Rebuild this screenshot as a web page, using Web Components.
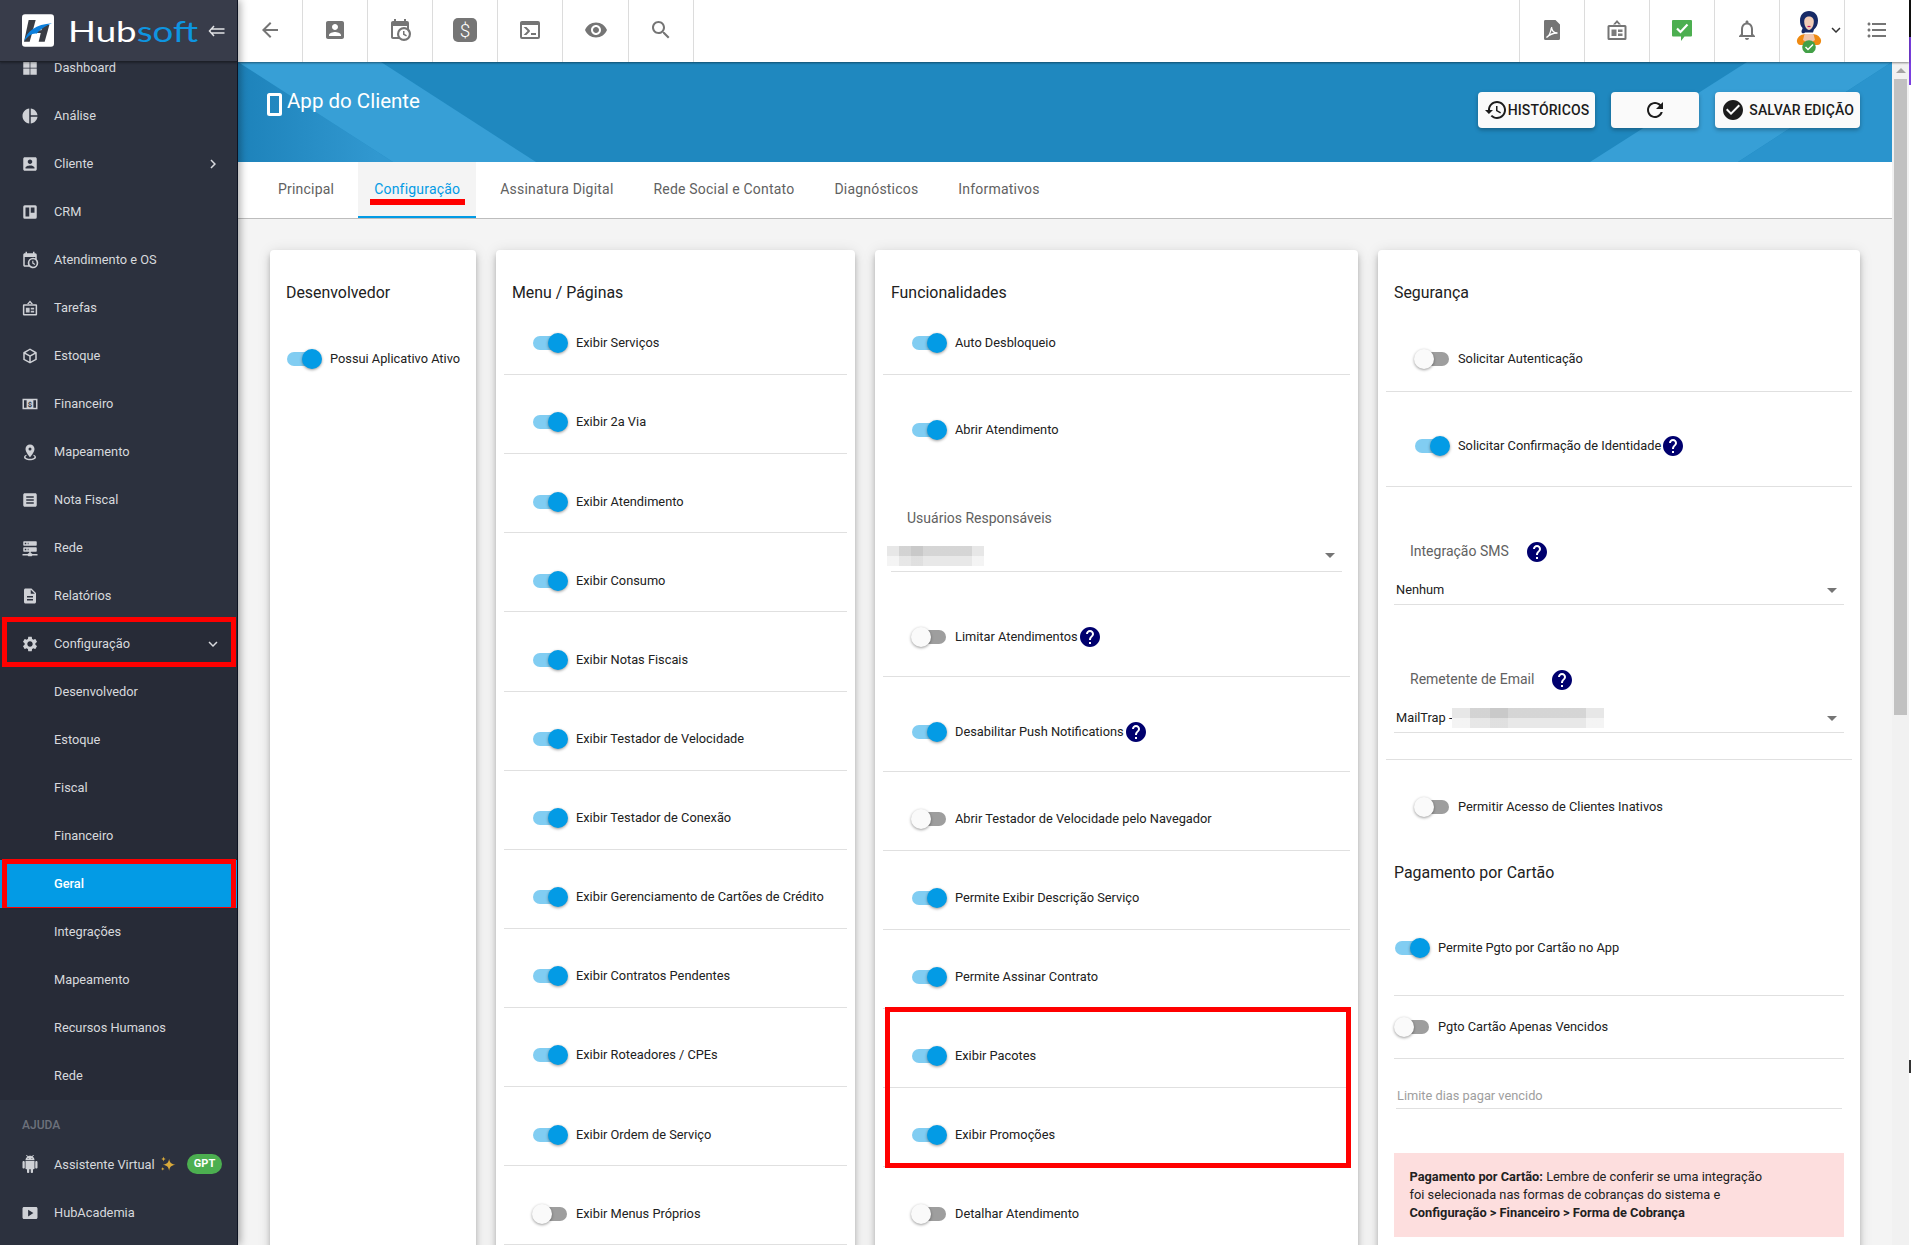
<!DOCTYPE html>
<html lang="pt-BR">
<head>
<meta charset="utf-8">
<title>Hubsoft - App do Cliente</title>
<style>
html,body{margin:0;height:100%;overflow:hidden;background:#f4f4f4;font-family:Roboto,"Liberation Sans",sans-serif;}
</style>
</head>
<body>
<hs-app>
  <hs-sidebar slot="side">
    <hs-nav-item icon="dashboard">Dashboard</hs-nav-item>
    <hs-nav-item icon="pie">Análise</hs-nav-item>
    <hs-nav-item icon="contact" chevron="chevron">Cliente</hs-nav-item>
    <hs-nav-item icon="trello">CRM</hs-nav-item>
    <hs-nav-item icon="calclock">Atendimento e OS</hs-nav-item>
    <hs-nav-item icon="board">Tarefas</hs-nav-item>
    <hs-nav-item icon="cube">Estoque</hs-nav-item>
    <hs-nav-item icon="cash">Financeiro</hs-nav-item>
    <hs-nav-item icon="marker">Mapeamento</hs-nav-item>
    <hs-nav-item icon="article">Nota Fiscal</hs-nav-item>
    <hs-nav-item icon="server">Rede</hs-nav-item>
    <hs-nav-item icon="report">Relatórios</hs-nav-item>
    <hs-nav-item icon="gear" chevron="expand" sub mark="cfg">Configuração</hs-nav-item>
    <hs-nav-item sub blank>Desenvolvedor</hs-nav-item>
    <hs-nav-item sub blank>Estoque</hs-nav-item>
    <hs-nav-item sub blank>Fiscal</hs-nav-item>
    <hs-nav-item sub blank>Financeiro</hs-nav-item>
    <hs-nav-item sub blank active mark="geral">Geral</hs-nav-item>
    <hs-nav-item sub blank>Integrações</hs-nav-item>
    <hs-nav-item sub blank>Mapeamento</hs-nav-item>
    <hs-nav-item sub blank>Recursos Humanos</hs-nav-item>
    <hs-nav-item sub blank>Rede</hs-nav-item>
    <hs-nav-heading>AJUDA</hs-nav-heading>
    <hs-nav-item icon="android" badge="GPT">Assistente Virtual <hs-icon name="sparkle" size="18" style="color:#d9a93a;margin-left:1px;vertical-align:-4px"></hs-icon></hs-nav-item>
    <hs-nav-item icon="play" style="margin-top:.6px">HubAcademia</hs-nav-item>
  </hs-sidebar>

  <hs-toolbar slot="top">
    <hs-tool icon="back"></hs-tool>
    <hs-tool icon="contact"></hs-tool>
    <hs-tool icon="calclock"></hs-tool>
    <hs-tool icon="dollar"></hs-tool>
    <hs-tool icon="console"></hs-tool>
    <hs-tool icon="eye"></hs-tool>
    <hs-tool icon="search"></hs-tool>
    <hs-tool slot="right" icon="pdf"></hs-tool>
    <hs-tool slot="right" icon="board"></hs-tool>
    <hs-tool slot="right" icon="chatcheck" tone="#4caf50"></hs-tool>
    <hs-tool slot="right" icon="bell"></hs-tool>
    <hs-tool slot="right"><hs-avatar></hs-avatar></hs-tool>
    <hs-tool slot="right" icon="list"></hs-tool>
  </hs-toolbar>

  <hs-banner slot="body" heading="App do Cliente">
    <hs-button icon="history">HISTÓRICOS</hs-button>
    <hs-button icon="refresh" wide></hs-button>
    <hs-button icon="checkcircle" spaced>SALVAR EDIÇÃO</hs-button>
  </hs-banner>

  <hs-tabs slot="body">
    <hs-tab>Principal</hs-tab>
    <hs-tab active>Configuração</hs-tab>
    <hs-tab>Assinatura Digital</hs-tab>
    <hs-tab>Rede Social e Contato</hs-tab>
    <hs-tab>Diagnósticos</hs-tab>
    <hs-tab>Informativos</hs-tab>
  </hs-tabs>

  <hs-grid slot="body">
    <hs-card heading="Desenvolvedor">
      <hs-row on h="112" c="56" pad="9" nodiv>Possui Aplicativo Ativo</hs-row>
    </hs-card>

    <hs-card heading="Menu / Páginas">
      <hs-row on h="72.1" c="40">Exibir Serviços</hs-row>
      <hs-row on>Exibir 2a Via</hs-row>
      <hs-row on>Exibir Atendimento</hs-row>
      <hs-row on>Exibir Consumo</hs-row>
      <hs-row on>Exibir Notas Fiscais</hs-row>
      <hs-row on>Exibir Testador de Velocidade</hs-row>
      <hs-row on>Exibir Testador de Conexão</hs-row>
      <hs-row on>Exibir Gerenciamento de Cartões de Crédito</hs-row>
      <hs-row on>Exibir Contratos Pendentes</hs-row>
      <hs-row on>Exibir Roteadores / CPEs</hs-row>
      <hs-row on>Exibir Ordem de Serviço</hs-row>
      <hs-row>Exibir Menus Próprios</hs-row>
    </hs-card>

    <hs-card heading="Funcionalidades">
      <hs-row on h="72.1" c="40">Auto Desbloqueio</hs-row>
      <hs-row on h="109.4" c="55" nodiv>Abrir Atendimento</hs-row>
      <hs-select label="Usuários Responsáveis" pt="23.2" gap="18.3" pb="5" lx="16" mx="8" mr="8" blur="97"></hs-select>
      <hs-row h="104.8" c="64.7" help>Limitar Atendimentos</hs-row>
      <hs-row on h="95" c="55" help>Desabilitar Push Notifications</hs-row>
      <hs-row h="79" c="47">Abrir Testador de Velocidade pelo Navegador</hs-row>
      <hs-row on>Permite Exibir Descrição Serviço</hs-row>
      <hs-row on>Permite Assinar Contrato</hs-row>
      <hs-mark>
        <hs-row on>Exibir Pacotes</hs-row>
        <hs-row on>Exibir Promoções</hs-row>
      </hs-mark>
      <hs-row c="46.8">Detalhar Atendimento</hs-row>
    </hs-card>

    <hs-card heading="Segurança">
      <hs-row h="88.5" c="55.5" pad="29">Solicitar Autenticação</hs-row>
      <hs-row on h="95" c="54.5" pad="29" help>Solicitar Confirmação de Identidade</hs-row>
      <hs-select label="Integração SMS" help value="Nenhum" pt="54.5" gap="19" pb="4" lx="16"></hs-select>
      <hs-select label="Remetente de Email" help value="MailTrap - " blur="152" pt="64" gap="19" pb="4" lx="16"></hs-select>
      <hs-spacer></hs-spacer>
      <hs-row h="101.5" c="46.5" pad="29" nodiv>Permitir Acesso de Clientes Inativos</hs-row>
      <hs-card-title>Pagamento por Cartão</hs-card-title>
      <hs-row on h="113.5" c="65.5" pad="1" mx="8">Permite Pgto por Cartão no App</hs-row>
      <hs-row h="62.5" c="30.7" pad="1" mx="8">Pgto Cartão Apenas Vencidos</hs-row>
      <hs-field>Limite dias pagar vencido</hs-field>
      <hs-alert><b>Pagamento por Cartão:</b> Lembre de conferir se uma integração<br>foi selecionada nas formas de cobranças do sistema e<br><b>Configuração &gt; Financeiro &gt; Forma de Cobrança</b></hs-alert>
    </hs-card>
  </hs-grid>
</hs-app>

<script>
const P = {
  back:'<path d="M20 11H7.83l5.59-5.59L12 4l-8 8 8 8 1.41-1.41L7.83 13H20v-2z"/>',
  contact:'<path d="M3 5v14c0 1.1.89 2 2 2h14c1.1 0 2-.9 2-2V5c0-1.1-.9-2-2-2H5c-1.11 0-2 .9-2 2zm12 4c0 1.66-1.34 3-3 3s-3-1.34-3-3 1.34-3 3-3 3 1.34 3 3zm-9 8c0-2 4-3.1 6-3.1s6 1.1 6 3.1v1H6v-1z"/>',
  calclock:'<path d="M15,13H16.5V15.82L18.94,17.23L18.19,18.53L15,16.69V13M19,8H5V19H9.67C9.24,18.09 9,17.07 9,16A7,7 0 0,1 16,9C17.07,9 18.09,9.24 19,9.67V8M5,21C3.89,21 3,20.1 3,19V5C3,3.89 3.89,3 5,3H6V1H8V3H16V1H18V3H19A2,2 0 0,1 21,5V11.1C22.24,12.36 23,14.09 23,16A7,7 0 0,1 16,23C14.09,23 12.36,22.24 11.1,21H5M16,11.15A4.85,4.85 0 0,0 11.15,16C11.15,18.68 13.32,20.85 16,20.85A4.85,4.85 0 0,0 20.85,16C20.85,13.32 18.68,11.15 16,11.15Z"/>',
  dollar:'<rect x="0" y="0" width="24" height="24" rx="5"/><text x="12" y="19" text-anchor="middle" font-family="Roboto,sans-serif" font-weight="300" font-size="19" fill="#fff">$</text>',
  console:'<path d="M20,19V7H4V19H20M20,3A2,2 0 0,1 22,5V19A2,2 0 0,1 20,21H4A2,2 0 0,1 2,19V5C2,3.89 2.9,3 4,3H20M13,17V15H18V17H13M9.58,13L5.57,9H8.4L11.7,12.3C12.09,12.69 12.09,13.33 11.7,13.72L8.42,17H5.59L9.58,13Z"/>',
  eye:'<path d="M12 4.5C7 4.5 2.73 7.61 1 12c1.73 4.39 6 7.5 11 7.5s9.27-3.11 11-7.5c-1.73-4.39-6-7.5-11-7.5zM12 17c-2.76 0-5-2.24-5-5s2.24-5 5-5 5 2.24 5 5-2.24 5-5 5zm0-8c-1.66 0-3 1.34-3 3s1.34 3 3 3 3-1.34 3-3-1.34-3-3-3z"/>',
  search:'<path d="M15.5 14h-.79l-.28-.27C15.41 12.59 16 11.11 16 9.5 16 5.91 13.09 3 9.5 3S3 5.91 3 9.5 5.91 16 9.5 16c1.61 0 3.09-.59 4.23-1.57l.27.28v.79l5 4.99L20.49 19l-4.99-5zm-6 0C7.01 14 5 11.99 5 9.5S7.01 5 9.5 5 14 7.01 14 9.5 11.99 14 9.5 14z"/>',
  pdf:'<path d="M5 2h10.5L20 6.5V20.5a1.5 1.5 0 0 1-1.5 1.5h-13A1.5 1.5 0 0 1 4 20.5v-17A1.5 1.5 0 0 1 5 2z"/><path d="M6.5 19.5c2.5-1.2 4.2-5 5-10.5.2 3.6 2 5.8 6 6-4.4.1-8.2 1.5-11 4.5z" fill="none" stroke="#fff" stroke-width="1.3"/>',
  board:'<path d="M4 7h16a1.5 1.5 0 0 1 1.5 1.5v12A1.5 1.5 0 0 1 20 22H4a1.5 1.5 0 0 1-1.5-1.5v-12A1.5 1.5 0 0 1 4 7zm.5 2v11h15V9zM8 6.5 12 2l4 4.5h-2.4L12 4.8 10.4 6.5z" fill-rule="evenodd"/><path d="M6.5 11.5h5v6.500h-5zM13 11.500h4.500V14H13zM13 15.500h4.500V18H13z" opacity=".95"/>',
  chatcheck:'<path d="M3 2h18a1 1 0 0 1 1 1v14.5a1 1 0 0 1-1 1h-6.5L11 23v-4.5H3a1 1 0 0 1-1-1V3a1 1 0 0 1 1-1z"/><path d="M7 10.500l3.500 3.500L17.500 6.500" fill="none" stroke="#fff" stroke-width="2.2"/>',
  bell:'<path d="M12 22c1.100 0 2-.9 2-2h-4c0 1.100.9 2 2 2zm6-6v-5c0-3.070-1.630-5.640-4.500-6.320V4c0-.83-.67-1.500-1.500-1.500s-1.500.67-1.500 1.500v.68C7.640 5.360 6 7.920 6 11v5l-2 2v1h16v-1l-2-2zm-2 1H8v-6c0-2.480 1.510-4.500 4-4.500s4 2.020 4 4.500v6z"/>',
  list:'<path d="M4 10.500c-.83 0-1.500.67-1.500 1.500s.67 1.500 1.500 1.500 1.500-.67 1.500-1.500-.67-1.500-1.500-1.500zm0-6c-.83 0-1.500.67-1.500 1.500S3.170 7.500 4 7.500 5.500 6.830 5.500 6 4.830 4.500 4 4.500zm0 12c-.83 0-1.500.68-1.500 1.500s.68 1.500 1.500 1.500 1.500-.68 1.500-1.500-.67-1.500-1.500-1.500zM7 19h14v-2H7v2zm0-6h14v-2H7v2zm0-8v2h14V5H7z"/>',
  expand:'<path d="M16.590 8.590L12 13.170 7.410 8.590 6 10l6 6 6-6z"/>',
  chevron:'<path d="M10 6L8.590 7.410 13.170 12l-4.580 4.590L10 18l6-6z"/>',
  history:'<path d="M13 3c-4.970 0-9 4.030-9 9H1l3.890 3.890.07.14L9 12H6c0-3.870 3.130-7 7-7s7 3.130 7 7-3.130 7-7 7c-1.930 0-3.680-.79-4.940-2.060l-1.420 1.420C8.270 19.990 10.510 21 13 21c4.970 0 9-4.030 9-9s-4.030-9-9-9zm-1 5v5l4.280 2.540.72-1.210-3.500-2.080V8H12z"/>',
  refresh:'<path d="M17.650 6.350C16.200 4.900 14.210 4 12 4c-4.420 0-7.990 3.580-7.990 8s3.570 8 7.990 8c3.730 0 6.840-2.550 7.730-6h-2.080c-.82 2.330-3.040 4-5.650 4-3.310 0-6-2.690-6-6s2.690-6 6-6c1.660 0 3.140.69 4.220 1.780L13 11h7V4l-2.350 2.350z"/>',
  checkcircle:'<path d="M12 2C6.480 2 2 6.480 2 12s4.480 10 10 10 10-4.480 10-10S17.520 2 12 2zm-2 15l-5-5 1.410-1.410L10 14.170l7.590-7.590L19 8l-9 9z"/>',
  help:'<path d="M12 2C6.480 2 2 6.480 2 12s4.480 10 10 10 10-4.480 10-10S17.520 2 12 2zm1 17h-2v-2h2v2zm2.070-7.750l-.9.92C13.450 12.900 13 13.500 13 15h-2v-.5c0-1.100.45-2.100 1.170-2.830l1.240-1.260c.37-.36.59-.86.59-1.410 0-1.100-.9-2-2-2s-2 .9-2 2H8c0-2.210 1.790-4 4-4s4 1.790 4 4c0 .88-.36 1.680-.93 2.250z"/>',
  dashboard:'<path d="M3 3h8.500v8.500H3zM12.500 3H21v8.500h-8.500zM3 12.500h8.500V21H3zM12.500 12.500H21V21h-8.500z"/>',
  pie:'<path d="M11,2V22C5.900,21.500 2,17.200 2,12C2,6.800 5.900,2.500 11,2M13,2V11H22C21.500,6.200 17.800,2.500 13,2M13,13V22C17.700,21.500 21.500,17.800 22,13H13Z"/>',
  trello:'<path fill-rule="evenodd" d="M5 3h14a2 2 0 0 1 2 2v14a2 2 0 0 1-2 2H5a2 2 0 0 1-2-2V5a2 2 0 0 1 2-2zm1 3v12h5V6zm7 0v7h5V6z"/>',
  cube:'<path d="M21,16.500C21,16.880 20.790,17.210 20.470,17.380L12.570,21.820C12.410,21.940 12.210,22 12,22C11.790,22 11.590,21.940 11.430,21.820L3.530,17.380C3.210,17.210 3,16.880 3,16.500V7.500C3,7.120 3.210,6.790 3.530,6.620L11.430,2.180C11.590,2.060 11.790,2 12,2C12.210,2 12.410,2.060 12.570,2.180L20.470,6.620C20.790,6.790 21,7.120 21,7.500V16.500M12,4.150L6.040,7.500L12,10.850L17.960,7.500L12,4.150M5,15.910L11,19.290V12.580L5,9.210V15.910M19,15.910V9.210L13,12.580V19.290L19,15.910Z"/>',
  cash:'<path fill-rule="evenodd" d="M2 5h20v14H2zm2 2v10h3.500V7zm12.500 0v10H20V7z"/><rect x="8" y="7" width="8" height="10"/><text x="12" y="15.500" text-anchor="middle" font-family="Roboto,sans-serif" font-weight="700" font-size="10" fill="#2c313e">$</text>',
  marker:'<path d="M12,2C15.310,2 18,4.660 18,7.950C18,12.410 12,19 12,19C12,19 6,12.410 6,7.950C6,4.660 8.690,2 12,2M12,6A2,2 0 0,0 10,8A2,2 0 0,0 12,10A2,2 0 0,0 14,8A2,2 0 0,0 12,6M20,19C20,21.210 16.420,23 12,23C7.580,23 4,21.210 4,19C4,17.710 5.220,16.560 7.110,15.830L7.750,16.740C6.670,17.190 6,17.810 6,18.500C6,19.880 8.690,21 12,21C15.310,21 18,19.880 18,18.500C18,17.810 17.330,17.190 16.250,16.740L16.890,15.830C18.780,16.560 20,17.710 20,19Z"/>',
  article:'<path d="M19 3H5c-1.100 0-2 .9-2 2v14c0 1.100.9 2 2 2h14c1.100 0 2-.9 2-2V5c0-1.100-.9-2-2-2zm-2 14H7v-2h10v2zm0-4H7v-2h10v2zm0-4H7V7h10v2z"/>',
  server:'<path d="M13,19H14A1,1 0 0,1 15,20H22V22H15A1,1 0 0,1 14,23H10A1,1 0 0,1 9,22H2V20H9A1,1 0 0,1 10,19H11V17H4A1,1 0 0,1 3,16V12A1,1 0 0,1 4,11H20A1,1 0 0,1 21,12V16A1,1 0 0,1 20,17H13V19M4,3H20A1,1 0 0,1 21,4V8A1,1 0 0,1 20,9H4A1,1 0 0,1 3,8V4A1,1 0 0,1 4,3M9,7H10V5H9V7M9,15H10V13H9V15M5,5V7H7V5H5M5,13V15H7V13H5Z"/>',
  report:'<path d="M14 2H6c-1.100 0-1.990.9-1.990 2L4 20c0 1.100.89 2 1.990 2H18c1.100 0 2-.9 2-2V8l-6-6zm2 16H8v-2h8v2zm0-4H8v-2h8v2zm-3-5V3.500L18.500 9H13z"/>',
  gear:'<path d="M19.140,12.940c0.040-0.300,0.060-0.610,0.060-0.940c0-0.320-0.020-0.640-0.070-0.940l2.030-1.580c0.180-0.140,0.230-0.410,0.120-0.610l-1.920-3.320c-0.120-0.220-0.370-0.290-0.590-0.220l-2.390,0.960c-0.500-0.380-1.030-0.700-1.620-0.940L14.400,2.810c-0.040-0.240-0.240-0.410-0.480-0.410h-3.840c-0.240,0-0.430,0.170-0.470,0.410L9.250,5.350C8.660,5.590,8.120,5.920,7.630,6.290L5.240,5.330c-0.220-0.080-0.470,0-0.590,0.220L2.740,8.870C2.620,9.080,2.660,9.340,2.860,9.480l2.030,1.580C4.840,11.360,4.800,11.690,4.800,12s0.020,0.640,0.070,0.940l-2.030,1.580c-0.180,0.140-0.230,0.410-0.120,0.610l1.920,3.320c0.120,0.220,0.370,0.290,0.590,0.220l2.390-0.960c0.500,0.380,1.030,0.700,1.620,0.940l0.360,2.540c0.050,0.240,0.240,0.410,0.480,0.410h3.840c0.240,0,0.440-0.170,0.470-0.410l0.360-2.540c0.590-0.240,1.130-0.560,1.620-0.940l2.390,0.960c0.220,0.080,0.470,0,0.590-0.220l1.920-3.320c0.120-0.220,0.070-0.470-0.120-0.610L19.140,12.940z M12,15.600c-1.980,0-3.600-1.620-3.600-3.600s1.620-3.600,3.600-3.600s3.600,1.620,3.600,3.600S13.980,15.600,12,15.600z"/>',
  android:'<path d="M6 18c0 .55.45 1 1 1h1v3.500c0 .83.67 1.500 1.500 1.500s1.500-.67 1.500-1.500V19h2v3.500c0 .83.67 1.500 1.500 1.500s1.500-.67 1.500-1.500V19h1c.55 0 1-.45 1-1V8H6v10zM3.500 8C2.670 8 2 8.670 2 9.500v7c0 .83.67 1.500 1.500 1.500S5 17.330 5 16.500v-7C5 8.670 4.330 8 3.500 8zm17 0c-.83 0-1.500.67-1.500 1.500v7c0 .83.67 1.500 1.500 1.500s1.500-.67 1.500-1.500v-7c0-.83-.67-1.500-1.500-1.500zm-4.970-5.840l1.300-1.300c.2-.2.2-.51 0-.71-.2-.2-.51-.2-.71 0l-1.480 1.480C13.850 1.230 12.950 1 12 1c-.96 0-1.860.23-2.660.63L7.850.15c-.2-.2-.51-.2-.71 0-.2.2-.2.51 0 .71l1.310 1.310C6.970 3.260 6 5.010 6 7h12c0-1.990-.97-3.750-2.470-4.840zM10 5H9V4h1v1zm5 0h-1V4h1v1z"/>',
  play:'<path d="M20 4H4c-1.100 0-2 .9-2 2v12c0 1.100.9 2 2 2h16c1.100 0 2-.9 2-2V6c0-1.100-.9-2-2-2zM9.500 16.500v-9l7 4.500-7 4.500z"/>',
  sparkle:'<path d="M13.500 5c1 5.500 2.500 7 8.500 8-6 1-7.500 2.500-8.500 8-1-5.500-2.500-7-8.500-8 6-1 7.500-2.500 8.500-8zM6 2c.4 2.200 1.100 2.900 3.300 3.300C7.100 5.700 6.400 6.400 6 8.600c-.4-2.200-1.100-2.900-3.300-3.300C4.900 4.900 5.600 4.200 6 2zM5 16c.3 1.700.8 2.200 2.500 2.500C5.800 18.800 5.300 19.300 5 21c-.3-1.700-.8-2.200-2.500-2.500C4.200 18.200 4.700 17.700 5 16z"/>'
};

function define(name, css, html, extra){
  customElements.define(name, class extends HTMLElement{
    constructor(){super();this.attachShadow({mode:'open'}).innerHTML='<style>'+css+'</style>'+html;}
    connectedCallback(){ if(extra) extra.call(this,this.shadowRoot); }
  });
}

define('hs-icon',':host{display:inline-block;line-height:0;color:inherit}svg{display:block;fill:currentColor}','<svg viewBox="0 0 24 24"></svg>',function(r){
  const s=this.getAttribute('size')||24,svg=r.querySelector('svg');
  svg.setAttribute('width',s);svg.setAttribute('height',s);
  svg.innerHTML=P[this.getAttribute('name')]||'';
});

define('hs-app',`
  :host{display:grid;grid-template-columns:238px minmax(0,1fr) 2px;height:1245px;overflow:hidden;background:#f4f4f4}
  .main{display:flex;flex-direction:column;min-width:0;height:1245px}
  .under{display:flex;flex:1;min-height:0}
  .body{flex:1;min-width:0;overflow:hidden;display:flex;flex-direction:column}
  .strip{background:#fff;display:flex;flex-direction:column}
  .strip i{display:block}
`,`
  <slot name="side"></slot>
  <div class="main">
    <slot name="top"></slot>
    <div class="under">
      <div class="body"><slot name="body"></slot></div>
      <hs-scrollbar></hs-scrollbar>
    </div>
  </div>
  <div class="strip">
    <i style="height:37px;background:#111"></i>
    <i style="height:48px;background:#7a3fe0"></i>
    <i style="height:975px"></i>
    <i style="height:13px;background:#333"></i>
  </div>
`);

define('hs-scrollbar',`
  :host{display:block;width:17px;background:#f1f1f1;flex:none}
  .arrow{height:17px;display:flex;align-items:center;justify-content:center}
  .arrow i{display:block;width:0;height:0;border:5px solid transparent;border-top:0;border-bottom:5px solid #a3a3a3}
  .thumb{height:636px;margin:0 2px 0 2px;background:#c1c1c1}
`,`<div class="arrow"><i></i></div><div class="thumb"></div>`);

define('hs-sidebar',`
  :host{display:flex;flex-direction:column;width:238px;height:1245px;background:#2c313e;border-right:1px solid #0d1322;box-sizing:border-box;position:relative;z-index:3;box-shadow:2px 0 8px rgba(0,0,0,.35);overflow:hidden}
  header{height:62px;flex:none;box-sizing:border-box;background:#383c4a;border-bottom:1px solid #1d2028;display:flex;align-items:center;padding-left:22px;position:relative;z-index:1;box-shadow:0 1px 2px rgba(0,0,0,.35)}
  .mark{width:32px;height:33px;flex:none}
  .word{margin-left:14px;font:400 28px/1 "Lato",Roboto,sans-serif;color:#fff;display:inline-block;width:105px;transform:scaleX(1.31);transform-origin:left center;white-space:nowrap}
  .word b{font-weight:400;color:#0e95e0}
  .coll{margin-left:auto;margin-right:12px;flex:none}
  nav{flex:1;min-height:0;overflow:hidden}
  .inner{margin-top:-17.800px}
`,`
  <header>
    <svg class="mark" viewBox="0 0 96 97"><rect width="96" height="97" rx="9" fill="#fff"/>
      <path d="M20 17h21L23 82H6z" fill="#3a3d44"/><path d="M62 32h20L68 82H50z" fill="#3a3d44"/><path d="M32 48h40l-3 8H30z" fill="#3a3d44"/>
      <path d="M7 80C13 52 42 30 90 27 72 34 54 46 44 58 30 56 18 66 7 80z" fill="#0b7fdc"/></svg>
    <span class="word">Hub<b>soft</b></span>
    <svg class="coll" width="17" height="12" viewBox="0 0 17 12" fill="none" stroke="#e2e3e6" stroke-width="1.5"><path d="M6 1 1.500 6 6 11M3.500 4H16.500M3.500 8H16.500"/></svg>
  </header>
  <nav><div class="inner"><slot></slot></div></nav>
`);

define('hs-nav-heading',`:host{display:block;height:40.100px;box-sizing:border-box;padding:17.600px 0 0 22px;font:500 12px/14px Roboto,sans-serif;color:#6d717c}`,`<slot></slot>`);

define('hs-nav-item',`
  :host{display:flex;align-items:center;height:48px;color:#d7d9dd;font:400 12.800px/16px Roboto,"Liberation Sans",sans-serif;position:relative;padding-right:15px;box-sizing:border-box}
  :host([sub]){background:#272b37}
  :host([active]){background:#039be5;color:#fff;font-weight:500}
  .ic{width:18px;height:18px;margin:0 15px 0 21px;flex:none;color:#cfd1d6}
  .t{white-space:nowrap;flex:1}
  .badge{background:#4caf50;color:#fff;font:700 11px/20px Roboto,sans-serif;height:20px;width:35px;text-align:center;border-radius:10px;flex:none}
  :host([mark])::after{content:"";position:absolute;left:2px;right:1px;border:5px solid #f00;box-sizing:border-box;pointer-events:none}
  :host([mark="cfg"])::after{top:-3.200px;height:50px}
  :host([mark="geral"])::after{top:-1.200px;height:52.500px}
`,`<span class="ic"></span><span class="t"><slot></slot></span>`,function(r){
  const ic=r.querySelector('.ic'),n=this.getAttribute('icon');
  if(n) ic.innerHTML='<hs-icon name="'+n+'" size="18"></hs-icon>';
  const c=this.getAttribute('chevron');
  if(c){const e=document.createElement('hs-icon');e.setAttribute('name',c);e.setAttribute('size','18');e.style.flex='none';r.appendChild(e);}
  const b=this.getAttribute('badge');
  if(b){const e=document.createElement('span');e.className='badge';e.textContent=b;r.appendChild(e);}
});

define('hs-toolbar',`
  :host{display:flex;height:62px;flex:none;background:#fff;position:relative;z-index:2;box-shadow:0 1px 2px rgba(0,0,0,.45)}
  .l,.r{display:flex}
  .r{margin-left:auto}
`,`<div class="l"><slot></slot></div><div class="r"><slot name="right"></slot></div>`);

define('hs-tool',`
  :host{display:flex;align-items:center;justify-content:center;width:65.100px;height:62px;padding-bottom:2px;box-sizing:border-box;border-right:1px solid #dcdcdc;color:#757575;flex:none}
  :host([slot="right"]){width:65px;border-right:0;border-left:1px solid #dcdcdc}
`,`<slot></slot>`,function(r){
  const n=this.getAttribute('icon');
  if(n){const t=this.getAttribute('tone');
    const e=document.createElement('hs-icon');e.setAttribute('name',n);e.setAttribute('size','24');if(t)e.style.color=t;r.appendChild(e);}
});

define('hs-avatar',`
  :host{display:flex;align-items:center;width:56px;margin-left:10px;flex:none}
  svg.p{flex:none}
`,`
  <svg class="p" width="40" height="46" viewBox="0 0 40 46">
    <path d="M8 33c1-4 5-6 9-6h6c4 0 8 2 9 6 .5 2-1 5-3 5H11c-2 0-3.500-3-3-5z" fill="#ef8a12"/>
    <path d="M15.500 27h9l1.500 6-6 4-6-4z" fill="#f0c4ab"/>
    <path d="M20 4c5.500 0 9 4 9 9.500 0 4-1.500 7-4 9l-1 3h-8c-1.500 1.500-3.500 1-3.500-1 0-1.500 1-2 1-3.500-2-2-2.500-4.500-2.500-7.500C11 8 14.500 4 20 4z" fill="#172a66"/>
    <path d="M20 9.500c2.800 0 4.800 1.500 4.800 5 0 4.500-2.500 8.500-4.800 8.500s-4.800-4-4.800-8.500c0-3.500 2-5 4.800-5z" fill="#f2cdb6"/>
    <path d="M18.500 19.500h3" stroke="#c2185b" stroke-width="1.200"/>
    <circle cx="20" cy="40" r="6.800" fill="#43a047"/>
    <path d="M16.500 40l2.500 2.500 5-5" fill="none" stroke="#fff" stroke-width="1.500"/>
  </svg>
  <hs-icon name="expand" size="18" style="color:#333;margin-left:-2px"></hs-icon>
`);

define('hs-banner',`
  :host{display:flex;align-items:center;height:100px;flex:none;background:#1f88bf;position:relative;padding:0 32px 4px 29px;box-sizing:border-box;overflow:hidden}
  svg.bg{position:absolute;left:0;top:0;width:100%;height:100%}
  .title{position:relative;display:flex;align-items:flex-start;color:#fff;font:400 20.500px/24px Roboto,sans-serif;align-self:flex-start;margin-top:27px}
  .ph{width:15px;height:23px;margin:4px 5px 0 0;border:3px solid #fff;border-bottom-width:3.500px;border-radius:2.500px;box-sizing:border-box;flex:none}
  .acts{position:relative;margin-left:auto;display:flex;gap:16px}
`,`
  <svg class="bg" viewBox="0 0 1654 100" preserveAspectRatio="none">
    <defs>
      <linearGradient id="l" x1="0" x2="1" y1="0" y2="0"><stop offset="0" stop-color="#1d82ba"/><stop offset=".9" stop-color="#3198d0"/></linearGradient>
    </defs>
    <path d="M0 0 155 100H0z" fill="url(#l)"/>
    <path d="M0 0H143L298 100H155z" fill="#379fd6"/>
    <path d="M1509 0H1654L1500 100H1352z" fill="#379fd6"/>
    <path d="M1654 0V100H1500z" fill="#2a94cd"/>
  </svg>
  <div class="title"><span class="ph"></span><span class="h"></span></div>
  <div class="acts"><slot></slot></div>
`,function(r){r.querySelector('.h').textContent=this.getAttribute('heading');});

define('hs-button',`
  :host{display:flex;align-items:center;height:36px;box-sizing:border-box;padding:0 6px;background:#fafafa;color:#1c1c1c;border-radius:4px;font:500 14px/36px Roboto,sans-serif;letter-spacing:.12px;white-space:nowrap;box-shadow:0 2px 4px rgba(0,0,0,.3)}
  :host([wide]){width:88px;justify-content:center}
  :host([spaced]) .ic{margin-right:4px}
  .ic{width:24px;height:24px;flex:none}
`,`<span class="ic"></span><slot></slot>`,function(r){
  r.querySelector('.ic').innerHTML='<hs-icon name="'+this.getAttribute('icon')+'" size="24"></hs-icon>';
});

define('hs-tabs',`
  :host{display:flex;gap:8px;height:57px;flex:none;box-sizing:border-box;background:#fff;border-bottom:1px solid #bdbdbd;padding-left:24px}
`,`<slot></slot>`);

define('hs-tab',`
  :host{display:block;height:56px;box-sizing:border-box;padding:0 16px;font:400 14px/54px Roboto,sans-serif;color:#616161;letter-spacing:.2px;position:relative;white-space:nowrap}
  :host([active]){background:#f4f4f4;color:#039be5;border-bottom:2px solid #039be5}
  :host([active])::after{content:"";position:absolute;left:12px;right:11px;top:37px;height:6px;background:#f00}
`,`<slot></slot>`);

define('hs-grid',`
  :host{display:grid;grid-template-columns:206px 359px 483px minmax(0,1fr);gap:20px;padding:31px 32px 0;min-height:1100px;box-sizing:border-box;align-items:stretch}
`,`<slot></slot>`);

define('hs-card',`
  :host{display:block;background:#fff;border-radius:4px;box-shadow:0 3px 5px -1px rgba(0,0,0,.2),0 5px 8px 0 rgba(0,0,0,.12),0 1px 14px 0 rgba(0,0,0,.1);padding:0 8px;min-width:0;height:1100px;box-sizing:border-box}
  .ttl{font:400 15.900px/21px Roboto,sans-serif;color:#212121;padding:32px 0 0 8px}
`,`<div class="ttl"></div><slot></slot>`,function(r){
  r.querySelector('.ttl').textContent=this.getAttribute('heading');
});

define('hs-card-title',`:host{display:block;font:400 15.900px/21px Roboto,sans-serif;color:#212121;padding-left:8px}`,`<slot></slot>`);

define('hs-toggle',`
  :host{display:block;position:relative;width:34px;height:14px;border-radius:7px;background:#9e9e9e;flex:none}
  :host([on]){background:#81cdf2}
  i{position:absolute;top:-3px;left:-1px;width:20px;height:20px;border-radius:50%;background:#fafafa;box-shadow:0 1px 3px rgba(0,0,0,.4)}
  :host([on]) i{left:auto;right:-1px;background:#039be5}
`,`<i></i>`);

define('hs-help',`:host{display:block;width:24px;height:24px;flex:none;color:#00006e}`,`<hs-icon name="help" size="24"></hs-icon>`);

define('hs-row',`
  :host{display:block}
  .r{display:flex;align-items:center;box-sizing:border-box;font:400 12.800px/20px Roboto,sans-serif;color:#212121;white-space:nowrap;border-bottom:1px solid #e0e0e0}
  .r.nd{border-bottom:0}
  .lb{margin-left:9px}
`,`<div class="r"><hs-toggle></hs-toggle><span class="lb"><slot></slot></span></div>`,function(r){
  const a=(k,d)=>this.hasAttribute(k)?+this.getAttribute(k):d;
  const h=a('h',79.14),c=a('c',47.3),nd=this.hasAttribute('nodiv'),el=r.querySelector('.r');
  const p=2*c-h+(nd?0:1);
  el.style.height=h+'px';
  if(p>=0)el.style.paddingTop=p+'px';else el.style.paddingBottom=(-p)+'px';
  el.style.paddingLeft=a('pad',29)+'px';
  const mx=a('mx',0);if(mx){el.style.marginLeft=mx+'px';el.style.marginRight=mx+'px';}
  if(nd)el.classList.add('nd');
  if(this.hasAttribute('on'))r.querySelector('hs-toggle').setAttribute('on','');
  if(this.hasAttribute('help'))el.appendChild(document.createElement('hs-help'));
});

define('hs-mark',`
  :host{display:block;position:relative}
  :host::after{content:"";position:absolute;left:2.300px;right:-.7px;top:-2.200px;bottom:-1.100px;border:5px solid #f00;box-sizing:border-box;pointer-events:none}
`,`<slot></slot>`);

define('hs-select',`
  :host{display:block;font:400 12.800px/20px Roboto,sans-serif;color:#212121}
  .lab{display:flex;align-items:center;height:20px;color:#616161;font-size:14px;white-space:nowrap;overflow:visible}
  hs-help{margin:2px 0 0 16px}
  .val{display:flex;align-items:center;border-bottom:1px solid #e0e0e0;padding-left:2px;height:20px;box-sizing:content-box;position:relative}
  .bl{height:20px;background:linear-gradient(180deg,rgba(0,0,0,.03) 50%,rgba(255,255,255,.35) 50%),linear-gradient(90deg,#eee 0 12%,#dadada 12% 25%,#cfcfcf 25% 37%,#dcdcdc 37% 88%,#eee 88%)}
  .caret{margin-left:auto;margin-right:7px;width:0;height:0;border:5px solid transparent;border-bottom:0;border-top:5px solid #757575}
`,`<div class="lab"><span class="lt"></span></div><div class="val"><span class="v"></span><span class="bl"></span><i class="caret"></i></div>`,function(r){
  const g=(k,d)=>this.hasAttribute(k)?this.getAttribute(k):d;
  const mx=+g('mx',8),mr=+g('mr',mx),lx=+g('lx',16.5);
  this.style.paddingTop=g('pt',0)+'px';
  const lab=r.querySelector('.lab'),val=r.querySelector('.val');
  lab.style.marginLeft=(mx+lx)+'px';
  r.querySelector('.lt').textContent=g('label','');
  if(this.hasAttribute('help'))lab.appendChild(document.createElement('hs-help'));
  val.style.margin=g('gap',19)+'px '+mr+'px 0 '+mx+'px';
  val.style.paddingBottom=g('pb',4)+'px';
  r.querySelector('.v').textContent=g('value','');
  const bl=r.querySelector('.bl'),b=g('blur',0);
  if(+b){bl.style.width=b+'px';if(!g('value','')){bl.style.marginLeft='-6px';}}else bl.remove();
});

define('hs-spacer',`:host{display:block;height:27px;box-sizing:border-box;border-bottom:1px solid #e0e0e0}`,``);

define('hs-field',`
  :host{display:block;margin:0 10px;padding:27.200px 0 2px 1px;border-bottom:1px solid #e0e0e0;font:400 12.800px/20px Roboto,sans-serif;color:#9e9e9e}
`,`<slot></slot>`);

define('hs-alert',`
  :host{display:block;margin:44px 8px 0;height:84px;box-sizing:border-box;padding:15.700px 15.500px;background:#fddede;font:400 12.800px/18px Roboto,sans-serif;color:#212121}
  ::slotted(b){font-weight:700}
`,`<slot></slot>`);
</script>
</body>
</html>
